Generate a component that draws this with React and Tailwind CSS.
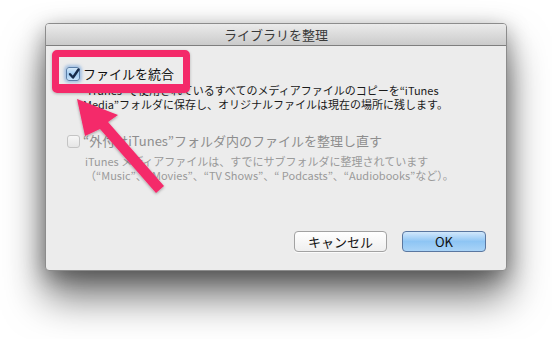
import React from "react";

const font = { fontFamily: '"Noto Sans CJK JP", "Noto Sans", sans-serif' };

function CheckedBox() {
  return (
    <div className="relative w-[14px] h-[14px] rounded-[3px] border border-[#5b7fa8] bg-gradient-to-b from-[#d6e9f9] via-[#9fcaf0] to-[#c9e3fa] shadow-[0_0_3px_2px_rgba(110,160,220,0.55)] shrink-0">
      <svg viewBox="0 0 14 14" className="absolute left-[0px] top-[-1px] w-[14px] h-[14px]">
        <path d="M3 7.2 L6 10.5 L11.5 2.5" fill="none" stroke="#152a4a" strokeWidth="2.4" strokeLinecap="round" strokeLinejoin="round" />
      </svg>
    </div>
  );
}

function EmptyBox() {
  return (
    <div className="w-[13px] h-[13px] rounded-[3px] border border-[#c4c4c4] bg-gradient-to-b from-[#f6f6f6] to-[#e6e6e6] shrink-0" />
  );
}

export default function App() {
  return (
    <div className="relative w-[552px] h-[339px] bg-white overflow-hidden" style={font}>
      <div className="pt-[23px]">
        <div className="mx-auto w-[462px] h-[248px] flex flex-col bg-[#ececec] border border-[#8c8c8c] rounded-[4px] shadow-[0_26px_40px_rgba(0,0,0,0.55),0_6px_22px_rgba(0,0,0,0.35)] overflow-hidden">
          <div className="h-[22px] shrink-0 flex items-center justify-center bg-gradient-to-b from-[#ebebeb] to-[#cbcbcb] border-b border-[#7e7e7e] text-[13px] leading-none text-[#3a3a3a]">
            ライブラリを整理
          </div>
          <div className="flex-1 flex flex-col pl-[20px] pr-[20px] pt-[19px] pb-[18px]">
            <div className="flex items-center h-[18px]">
              <div className="w-[17px] flex"><CheckedBox /></div>
              <span className="text-[13px] leading-[18px] text-[#111]">ファイルを統合</span>
            </div>
            <div className="pl-[17px] text-[11px] leading-[14px] text-[#1a1a1a]">
              <div>“iTunes”で使用されているすべてのメディアファイルのコピーを“iTunes</div>
              <div>Media”フォルダに保存し、オリジナルファイルは現在の場所に残します。</div>
            </div>
            <div className="flex items-center h-[18px] mt-[21px]">
              <div className="w-[17px] flex pl-[1px]"><EmptyBox /></div>
              <span className="text-[13px] leading-[18px] text-[#8e8e8e]">“外付けiTunes”フォルダ内のファイルを整理し直す</span>
            </div>
            <div className="pl-[19px] mt-[4px] text-[11px] leading-[14px] text-[#9a9a9a]">
              <div>iTunes メディアファイルは、すでにサブフォルダに整理されています</div>
              <div>（“Music”、“Movies”、“TV Shows”、“ Podcasts”、“Audiobooks”など）。</div>
            </div>
            <div className="flex-1" />
            <div className="flex justify-end gap-[15px]">
              <button className="w-[93px] h-[21px] rounded-[4px] border border-[#a2a2a2] bg-gradient-to-b from-white to-[#efefef] text-[13px] leading-none text-[#111] shadow-[0_1px_0_rgba(255,255,255,0.8)]">
                キャンセル
              </button>
              <button className="w-[84px] h-[21px] rounded-[4px] border border-[#5a77a0] bg-gradient-to-b from-[#d2e8fb] via-[#8ec5f4] to-[#a9d3f7] text-[13px] leading-none text-[#111]">
                OK
              </button>
            </div>
          </div>
        </div>
      </div>

      {/* annotation: highlight box */}
      <div className="absolute left-[52px] top-[50px] w-[138px] h-[43px] rounded-[5px] border-x-[7px] border-t-[7px] border-b-[9px] border-[#f42a6a] shadow-[0_1px_3px_rgba(0,0,0,0.25)]" />

      {/* annotation: arrow */}
      <svg className="absolute left-0 top-0" width="552" height="339" viewBox="0 0 552 339">
        <defs>
          <filter id="sh" x="-20%" y="-20%" width="140%" height="140%">
            <feDropShadow dx="0" dy="1" stdDeviation="1.5" floodColor="#000" floodOpacity="0.35" />
          </filter>
        </defs>
        <path
          d="M77 99 L118 115 L108 122 L164 186 L156 193 L100 129 L85 136 Z"
          fill="#f42a6a"
          filter="url(#sh)"
        />
      </svg>
    </div>
  );
}
